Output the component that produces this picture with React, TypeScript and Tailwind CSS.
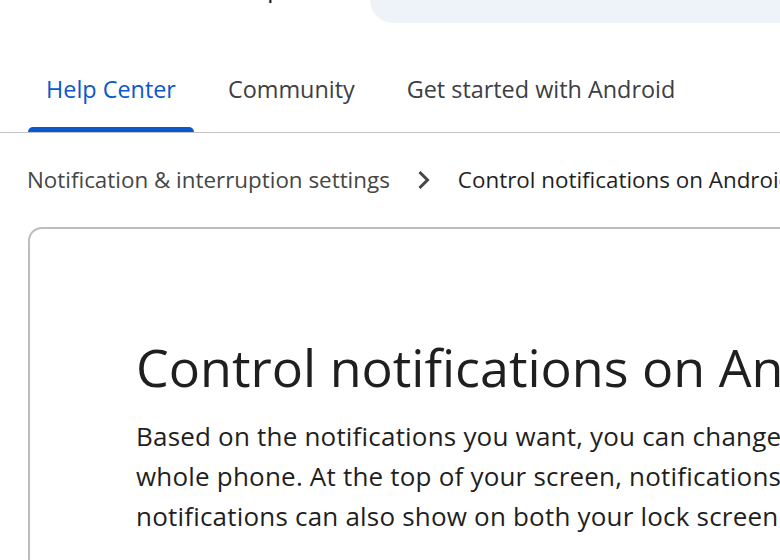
import React from "react";

const font = { fontFamily: "'Open Sans', Roboto, sans-serif" };

export default function App() {
  return (
    <div className="w-[780px] h-[560px] overflow-hidden bg-white" style={font}>
      {/* top bar remnants */}
      <div className="flex h-[23px] overflow-hidden">
        <div className="w-[370px] relative">
          <span className="absolute left-[123px] top-[-32px] text-[26px] text-[#1f1f1f]">Android Help</span>
        </div>
        <div className="flex-1 bg-[#eef2f9] rounded-bl-[30px]" />
      </div>

      {/* tabs */}
      <div className="flex items-end h-[110px] border-b-[1.5px] border-[#c4c4c4] pl-[28px] gap-[16px] whitespace-nowrap">
        <div className="relative px-[18px] h-[60px] text-[23.4px] text-[#0b57d0]">
          Help Center
          <div className="absolute left-0 right-0 bottom-0 h-[5px] bg-[#0b57d0] rounded-t-[5px]" />
        </div>
        <div className="px-[18px] h-[60px] text-[23.4px] text-[#3c4043]">Community</div>
        <div className="px-[18px] h-[60px] text-[23.4px] text-[#3c4043]">Get started with Android</div>
      </div>

      {/* breadcrumb */}
      <div className="flex items-center h-[94px] pl-[27px] text-[22.4px] whitespace-nowrap">
        <span className="shrink-0 text-[#444746]">Notification &amp; interruption settings</span>
        <svg width="14" height="20" viewBox="0 0 14 20" className="shrink-0 ml-[27px] mr-[27px]">
          <path d="M2.5 2 L10.5 10 L2.5 18" fill="none" stroke="#444746" strokeWidth="3" />
        </svg>
        <span className="shrink-0 text-[#1f1f1f]">Control notifications on Android</span>
      </div>

      {/* card */}
      <div className="ml-[28px] w-[800px] h-[400px] border-2 border-[#bdbdbd] rounded-[14px] pl-[106px] pt-[108px] whitespace-nowrap">
        <h1 className="text-[52px] leading-[60px] text-[#1f1f1f]">Control notifications on Android</h1>
        <p className="mt-[19px] text-[26px] leading-[40px] tracking-[0.2px] text-[#1f1f1f]">
          Based on the notifications you want, you can change settings for the<br />
          whole phone. At the top of your screen, notifications show in the status bar<br />
          notifications can also show on both your lock screen and home screen
        </p>
      </div>
    </div>
  );
}
